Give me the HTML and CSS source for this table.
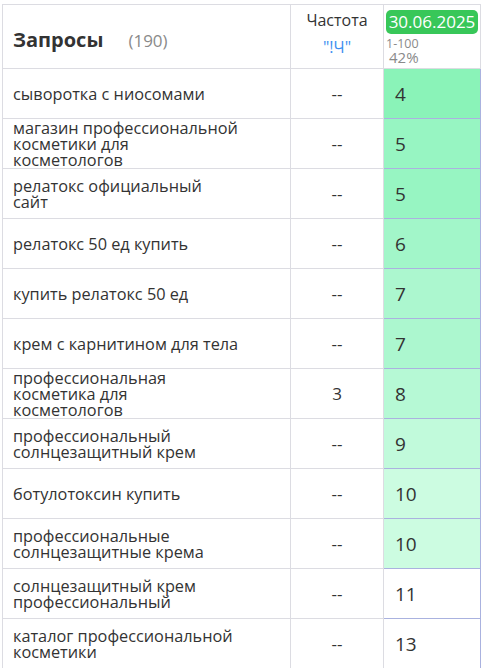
FILE: index.html
```html
<!DOCTYPE html>
<html lang="ru">
<head>
<meta charset="utf-8">
<link rel="stylesheet" href="styles.css">
</head>
<body>
<table class="grid">
  <colgroup><col class="c1"><col class="c2"><col class="c3"></colgroup>
  <thead>
    <tr class="head">
      <th class="h-q"><span class="title">Запросы</span><span class="count">(190)</span></th>
      <th class="h-f"><div class="freq">Частота</div><div class="freq-mode">"!Ч"</div></th>
      <th class="h-d"><div class="date">30.06.2025</div><div class="range">1-100</div><div class="pct">42%</div></th>
    </tr>
  </thead>
  <tbody>
    <tr><td class="q">сыворотка с ниосомами</td><td class="f">--</td><td class="p" style="background:#8af3b8">4</td></tr>
    <tr><td class="q">магазин профессиональной косметики для косметологов</td><td class="f">--</td><td class="p" style="background:#97f5c2">5</td></tr>
    <tr><td class="q">релатокс официальный сайт</td><td class="f">--</td><td class="p" style="background:#97f5c2">5</td></tr>
    <tr><td class="q">релатокс 50 ед купить</td><td class="f">--</td><td class="p" style="background:#a2f6c9">6</td></tr>
    <tr><td class="q">купить релатокс 50 ед</td><td class="f">--</td><td class="p" style="background:#acf7cf">7</td></tr>
    <tr><td class="q">крем с карнитином для тела</td><td class="f">--</td><td class="p" style="background:#acf7cf">7</td></tr>
    <tr><td class="q">профессиональная косметика для косметологов</td><td class="f">3</td><td class="p" style="background:#b6f9d5">8</td></tr>
    <tr><td class="q">профессиональный солнцезащитный крем</td><td class="f">--</td><td class="p" style="background:#c1fadb">9</td></tr>
    <tr><td class="q">ботулотоксин купить</td><td class="f">--</td><td class="p" style="background:#ccfce1">10</td></tr>
    <tr><td class="q">профессиональные солнцезащитные крема</td><td class="f">--</td><td class="p" style="background:#ccfce1">10</td></tr>
    <tr><td class="q">солнцезащитный крем профессиональный</td><td class="f">--</td><td class="p">11</td></tr>
    <tr><td class="q">каталог профессиональной косметики</td><td class="f">--</td><td class="p">13</td></tr>
  </tbody>
</table>
</body>
</html>
```
FILE: styles.css
```css
html, body {
  margin: 0;
  background: #fff;
}
body {
  padding: 4px 0 0 2px;
  font-family: "Open Sans", "Liberation Sans", sans-serif;
  color: #333;
  overflow: hidden;
}
.grid {
  border-collapse: collapse;
  width: 478px;
  table-layout: fixed;
}
.c1 { width: 288px; }
.c2 { width: 93px; }
.c3 { width: 97px; }
.grid th, .grid td {
  border: 1px solid #dcdce2;
  padding: 0;
}
.head th {
  height: 63px;
  font-weight: normal;
  vertical-align: top;
}
.grid .h-q {
  text-align: left;
  vertical-align: middle;
  padding-left: 10px;
}
.title {
  font-size: 20px;
  font-weight: 700;
  color: #333;
  position: relative;
  top: 3px;
}
.count {
  font-size: 17px;
  color: #8a8a8a;
  margin-left: 25px;
  position: relative;
  top: 3px;
}
.h-f {
  text-align: center;
}
.freq {
  font-size: 16px;
  line-height: 20px;
  margin-top: 5px;
  color: #333;
}
.freq-mode {
  font-size: 16px;
  line-height: 18px;
  margin-top: 8px;
  color: #3d8ff0;
}
.grid .h-d {
  text-align: left;
  padding: 0 2px;
}
.date {
  margin-top: 5px;
  background: #38c759;
  color: #fff;
  font-size: 17px;
  line-height: 24px;
  border-radius: 5px;
  text-align: center;
  padding: 0 1px;
}
.range {
  font-size: 12.5px;
  line-height: 13px;
  color: #8a8a8a;
  margin-top: 3px;
  padding-left: 0;
}
.pct {
  font-size: 15px;
  line-height: 15px;
  color: #8a8a8a;
  padding-left: 3px;
}
.grid tbody td {
  height: 49px;
}
.grid .q {
  font-size: 16.3px;
  line-height: 16px;
  padding: 0 51px 0 10px;
  color: #333;
}
.f {
  font-size: 17px;
  text-align: center;
  color: #333;
}
.grid .p {
  font-size: 19px;
  padding-left: 11px;
  color: #333;
  border-color: #aab2df;
}
```
